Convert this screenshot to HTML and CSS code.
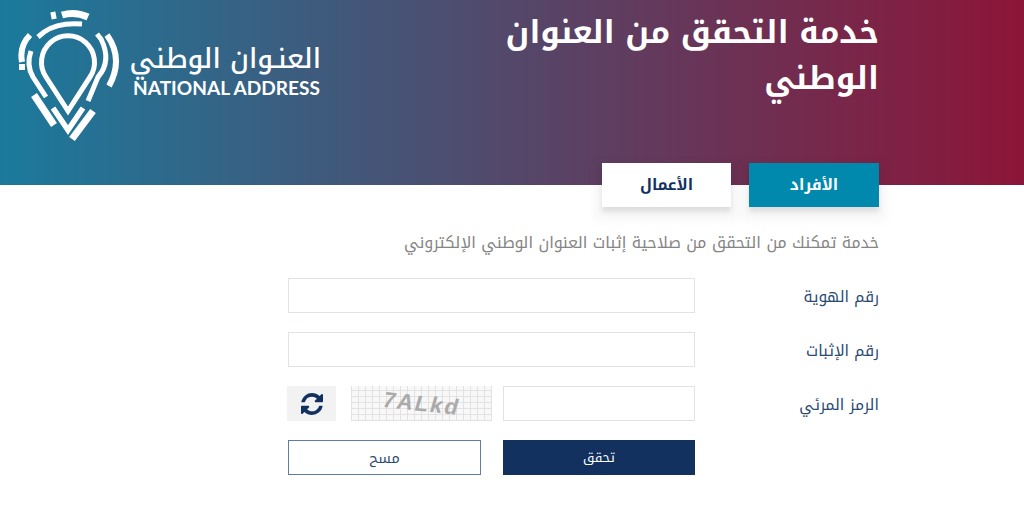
FILE: index.html
```
<!DOCTYPE html>
<html lang="ar" dir="rtl">
<head>
<meta charset="utf-8">
<title>خدمة التحقق من العنوان الوطني</title>
<link rel="stylesheet" href="styles.css">
</head>
<body>
<header class="hero">
  <h1 class="hero-title">خدمة التحقق من العنوان الوطني</h1>
  <div class="brand" dir="ltr">
    <svg class="brand-mark" width="104" height="134" viewBox="16 8 104 134" fill="none" stroke="#fff" stroke-width="5">
      <path d="M68 110 L46 76 A26.500 26.500 0 1 1 90 76 Z"/>
      <path d="M62 14 Q75 10 88 16" stroke-width="7"/>
      <path d="M51 15 L56 14" stroke-width="7"/>
      <path d="M38 36 L44 31 Q58 21 82 23"/>
      <path d="M30 34 Q19 45 22 61" stroke-width="6"/>
      <path d="M22 63 L22 69" stroke-width="6"/>
      <path d="M31 50 Q26 64 33 76 L46 96"/>
      <path d="M34 94 L54 124" stroke-width="7"/>
      <path d="M53 107 L68 129 L83 107" stroke-width="5.500"/>
      <path d="M72 138 L93 110" stroke-width="7"/>
      <path d="M97 33 L101 38 Q112 60 98 76 L88 100"/>
      <path d="M107 34 Q124 58 109 85" stroke-width="6"/>
    </svg>
    <div class="brand-text">
      <span class="brand-ar" dir="rtl">العنـوان الوطني</span>
      <span class="brand-en">NATIONAL ADDRESS</span>
    </div>
  </div>
</header>
<main class="content">
  <nav class="tabs">
    <a class="tab tab-active">الأفراد</a>
    <a class="tab">الأعمال</a>
  </nav>
  <p class="lead">خدمة تمكنك من التحقق من صلاحية إثبات العنوان الوطني الإلكتروني</p>
  <form class="form">
    <div class="row">
      <label class="label">رقم الهوية</label>
      <input class="input input-wide" type="text">
    </div>
    <div class="row">
      <label class="label">رقم الإثبات</label>
      <input class="input input-wide" type="text">
    </div>
    <div class="row">
      <label class="label">الرمز المرئي</label>
      <input class="input input-half" type="text">
      <div class="captcha" dir="ltr"><span class="captcha-text">7ALkd</span></div>
      <button class="refresh" type="button" aria-label="تحديث">
        <svg width="22" height="22" viewBox="0 0 1536 1536" fill="#12315f"><path d="M1511 928q0 5-1 7-64 268-268 434.500t-478 166.500q-146 0-282.500-55t-243.500-157l-129 129q-19 19-45 19t-45-19-19-45v-448q0-26 19-45t45-19h448q26 0 45 19t19 45-19 45l-137 137q71 66 161 102t187 36q134 0 250-65t186-179q11-17 53-117 8-23 30-23h192q13 0 22.500 9.500t9.500 22.500zM1536 128v448q0 26-19 45t-45 19h-448q-26 0-45-19t-19-45 19-45l138-138q-148-137-349-137-134 0-250 65t-186 179q-11 17-53 117-8 23-30 23h-199q-13 0-22.500-9.500t-9.500-22.500v-7q65-268 270-434.500t480-166.500q146 0 284 55.500t245 156.500l130-129q19-19 45-19t45 19 19 45z"/></svg>
      </button>
    </div>
    <div class="row row-actions">
      <span class="label"></span>
      <button class="btn btn-primary" type="button">تحقق</button>
      <button class="btn btn-outline" type="button">مسح</button>
    </div>
  </form>
</main>
</body>
</html>
```
FILE: styles.css
```
* { box-sizing: border-box; }
html, body { margin: 0; padding: 0; }
body {
  background: #fff;
  font-family: "Noto Kufi Arabic", "DejaVu Sans", sans-serif;
  color: #12315f;
  height: 524px;
  overflow: hidden;
}
.hero {
  height: 185px;
  background: linear-gradient(90deg, #1b7a9c 0%, #8c1538 100%);
  display: flex;
  justify-content: space-between;
  align-items: flex-start;
  padding: 10px 145px 0 16px;
}
.hero-title {
  margin: 0;
  width: 390px;
  font-size: 31.300px;
  line-height: 46px;
  font-weight: 700;
  color: #fff;
}
.brand {
  display: flex;
  align-items: flex-start;
  gap: 13px;
  margin-top: -1px;
}
.brand-text { display: flex; flex-direction: column; align-items: stretch; width: 188px; padding-top: 33px; color: #fff; }
.brand-ar { font-size: 27px; line-height: 34px; font-weight: 500; text-align: center; white-space: nowrap; }
.brand-en { font-family: "Lato", sans-serif; font-size: 19.100px; line-height: 24px; font-weight: 700; white-space: nowrap; }
.content { padding: 0 145px; margin-top: -22px; }
.tabs { display: flex; gap: 18px; }
.tab {
  width: 129px;
  height: 44px;
  display: flex;
  align-items: center;
  justify-content: center;
  background: #fff;
  color: #12315f;
  font-size: 15.500px;
  font-weight: 700;
  box-shadow: 0 5px 5px rgba(0,0,0,.1), 0 6px 8px 8px rgba(0,0,0,.03);
}
.tab-active { width: 130px; background: #0089ad; color: #fff; }
.lead {
  margin: 23px 0 0;
  font-size: 16px;
  line-height: 25px;
  color: #858585;
}
.form { margin-top: 23px; display: flex; flex-direction: column; gap: 19px; }
.row { display: flex; align-items: stretch; height: 35px; }
.label {
  width: 184px;
  flex: none;
  font-size: 15.500px;
  line-height: 39px;
  color: #2a4a72;
}
.input {
  height: 35px;
  border: 1px solid #dfe3e8;
  background: #fff;
  outline: none;
}
.input-wide { width: 407px; }
.input-half { width: 192px; }
.captcha {
  width: 141px;
  height: 35px;
  margin-right: 11px;
  background-color: #f8f8f8;
  background-image:
    repeating-linear-gradient(90deg, #e2e2e2 0 1px, transparent 1px 7px),
    repeating-linear-gradient(0deg, #e2e2e2 0 1px, transparent 1px 6px);
  display: flex;
  align-items: center;
  justify-content: center;
}
.captcha-text {
  font-family: "Liberation Sans", sans-serif;
  font-size: 22px;
  font-weight: 700;
  letter-spacing: 2px;
  color: #aaa;
  transform: rotate(6deg) skewX(-10deg);
}
.refresh {
  width: 49px;
  height: 35px;
  margin-right: 15px;
  border: 0;
  padding: 0;
  background: #f2f2f2;
  display: flex;
  align-items: center;
  justify-content: center;
}
.btn {
  height: 35px;
  font-family: inherit;
  font-size: 13px;
  padding: 0;
}
.btn-primary { width: 192px; background: #12315f; border: 1px solid #12315f; color: #fff; }
.btn-outline { width: 193px; margin-right: 22px; font-size: 14.500px; background: #fff; border: 1px solid #5f7ba0; color: #2a4a72; }
```
